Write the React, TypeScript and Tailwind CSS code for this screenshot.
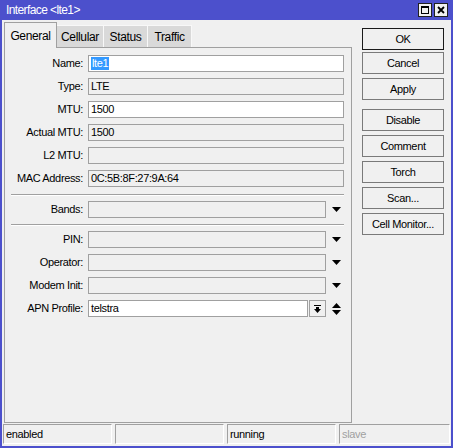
import React from "react";

const font = { fontFamily: '"Liberation Sans", Arial, sans-serif' };

function DownArrow() {
  return (
    <svg width="9" height="5" viewBox="0 0 9 5">
      <polygon points="0,0 9,0 4.5,5" fill="#000" />
    </svg>
  );
}

function UpDownArrow() {
  return (
    <svg width="9" height="12" viewBox="0 0 9 12">
      <polygon points="4.5,0 9,5 0,5" fill="#000" />
      <polygon points="0,7 9,7 4.5,12" fill="#000" />
    </svg>
  );
}

function PickIcon() {
  return (
    <svg width="7" height="8" viewBox="0 0 7 8">
      <rect x="0" y="0" width="7" height="1" fill="#000" />
      <rect x="2" y="2" width="3" height="2" fill="#000" />
      <polygon points="0,4 7,4 3.5,8" fill="#000" />
    </svg>
  );
}

type Field = {
  label: string;
  value?: string;
  editable?: boolean;
  selected?: boolean;
  kind?: "plain" | "drop" | "apn";
};

function Row({ label, value, editable, selected, kind = "plain" }: Field) {
  return (
    <div className="flex h-[17px] items-center">
      <div className="w-[79px] shrink-0 pr-[1px] text-right">{label}:</div>
      <div
        className={
          "ml-[4px] flex h-[17px] flex-1 items-center border border-[#a0a0a0] pl-[2px] " +
          (editable ? "bg-white" : "bg-[#f0f0f0]")
        }
      >
        {selected ? (
          <span className="bg-[#3399ff] px-[1px] leading-[13px] text-white">{value}</span>
        ) : (
          <span>{value}</span>
        )}
      </div>
      {kind === "drop" && (
        <div className="flex w-[18px] shrink-0 items-center justify-center pl-[3px]">
          <DownArrow />
        </div>
      )}
      {kind === "apn" && (
        <>
          <div className="ml-[1px] flex h-[17px] w-[17px] shrink-0 items-center justify-center border border-[#a0a0a0] bg-[#f0f0f0]">
            <PickIcon />
          </div>
          <div className="flex w-[18px] shrink-0 items-center justify-center pl-[3px]">
            <UpDownArrow />
          </div>
        </>
      )}
    </div>
  );
}

function Separator() {
  return <div className="ml-[6px] h-0 border-t border-[#a0a0a0] border-b border-b-white" />;
}

const tabs = [
  { name: "Cellular", w: "w-[47px]" },
  { name: "Status", w: "w-[44px]" },
  { name: "Traffic", w: "w-[44px]" },
];

const buttons = [
  { name: "Cancel", mt: "mt-[2px]" },
  { name: "Apply", mt: "mt-[4px]" },
  { name: "Disable", mt: "mt-[9px]" },
  { name: "Comment", mt: "mt-[4px]" },
  { name: "Torch", mt: "mt-[4px]" },
  { name: "Scan...", mt: "mt-[4px]" },
  { name: "Cell Monitor...", mt: "mt-[4px]" },
];

export default function App() {
  return (
    <div
      className="flex h-[448px] w-[453px] flex-col overflow-hidden bg-[#f0f0f0] text-[11px] tracking-[-0.35px] text-black"
      style={font}
    >
      {/* title bar */}
      <div className="flex h-[20px] shrink-0 items-center bg-[#4c50cc] pl-[6px] pr-[5px]">
        <span className="flex-1 text-[12px] tracking-[-0.6px] text-white">Interface &lt;lte1&gt;</span>
        <div className="flex gap-[2px]">
          <div className="flex h-[14px] w-[14px] items-center justify-center border border-[#202020] bg-[#f0f0f0]">
            <div className="h-[8px] w-[8px] border border-t-2 border-black" />
          </div>
          <div className="flex h-[14px] w-[14px] items-center justify-center border border-[#202020] bg-[#f0f0f0]">
            <svg width="8" height="8" viewBox="0 0 8 8">
              <path d="M1 1 L7 7 M7 1 L1 7" stroke="#000" strokeWidth="1.8" />
            </svg>
          </div>
        </div>
      </div>

      <div className="flex flex-1 border-x-2 border-[#4c50cc]">
        {/* left: tabs + panel */}
        <div className="ml-[2px] flex w-[348px] flex-col pt-[2px]">
          <div className="flex h-[25px] items-end">
            <div className="relative z-10 -mb-px flex h-[26px] w-[53px] items-center justify-center border border-b-0 border-[#a0a0a0] bg-[#f0f0f0] text-[12px]">
              General
            </div>
            {tabs.map((t) => (
              <div
                key={t.name}
                className={
                  "flex h-[22px] items-center justify-center border-r border-t border-[#f8f8f8] bg-[#d9d9d9] pt-[1px] text-[12px] " +
                  t.w
                }
              >
                {t.name}
              </div>
            ))}
          </div>
          <div className="flex h-[376px] flex-col border border-[#a0a0a0] pr-[7px] pt-[7px]">
            <div className="flex flex-col gap-[6px]">
              <Row label="Name" value="lte1" editable selected />
              <Row label="Type" value="LTE" />
              <Row label="MTU" value="1500" editable />
              <Row label="Actual MTU" value="1500" />
              <Row label="L2 MTU" value="" />
              <Row label="MAC Address" value="0C:5B:8F:27:9A:64" />
            </div>
            <div className="mt-[7px]">
              <Separator />
            </div>
            <div className="mt-[5px]">
              <Row label="Bands" kind="drop" />
            </div>
            <div className="mt-[6px]">
              <Separator />
            </div>
            <div className="mt-[5px] flex flex-col gap-[6px]">
              <Row label="PIN" kind="drop" />
              <Row label="Operator" kind="drop" />
              <Row label="Modem Init" kind="drop" />
              <Row label="APN Profile" value="telstra" editable kind="apn" />
            </div>
          </div>
        </div>

        {/* right: buttons */}
        <div className="ml-[10px] flex w-[82px] flex-col pt-[8px]">
          <div className="flex h-[22px] items-center justify-center border border-[#1a1a1a] bg-[#f0f0f0]">OK</div>
          {buttons.map((b) => (
            <div
              key={b.name}
              className={"flex h-[22px] items-center justify-center border border-[#7a7a7a] bg-[#f0f0f0] " + b.mt}
            >
              {b.name}
            </div>
          ))}
        </div>
      </div>

      {/* status bar */}
      <div className="flex h-[25px] shrink-0 gap-[3px] border-x-2 border-b-2 border-[#4c50cc] pl-[1px] pr-[1px] pt-[1px]">
        {["enabled", "", "running"].map((s, i) => (
          <div
            key={i}
            className="flex h-[20px] w-[109px] items-center border border-[#a0a0a0] border-b-white border-r-white pl-[2px]"
          >
            {s}
          </div>
        ))}
        <div className="flex h-[20px] flex-1 items-center border border-[#a0a0a0] border-b-white border-r-white pl-[2px] text-[#a0a0a0]">
          slave
        </div>
      </div>
    </div>
  );
}
